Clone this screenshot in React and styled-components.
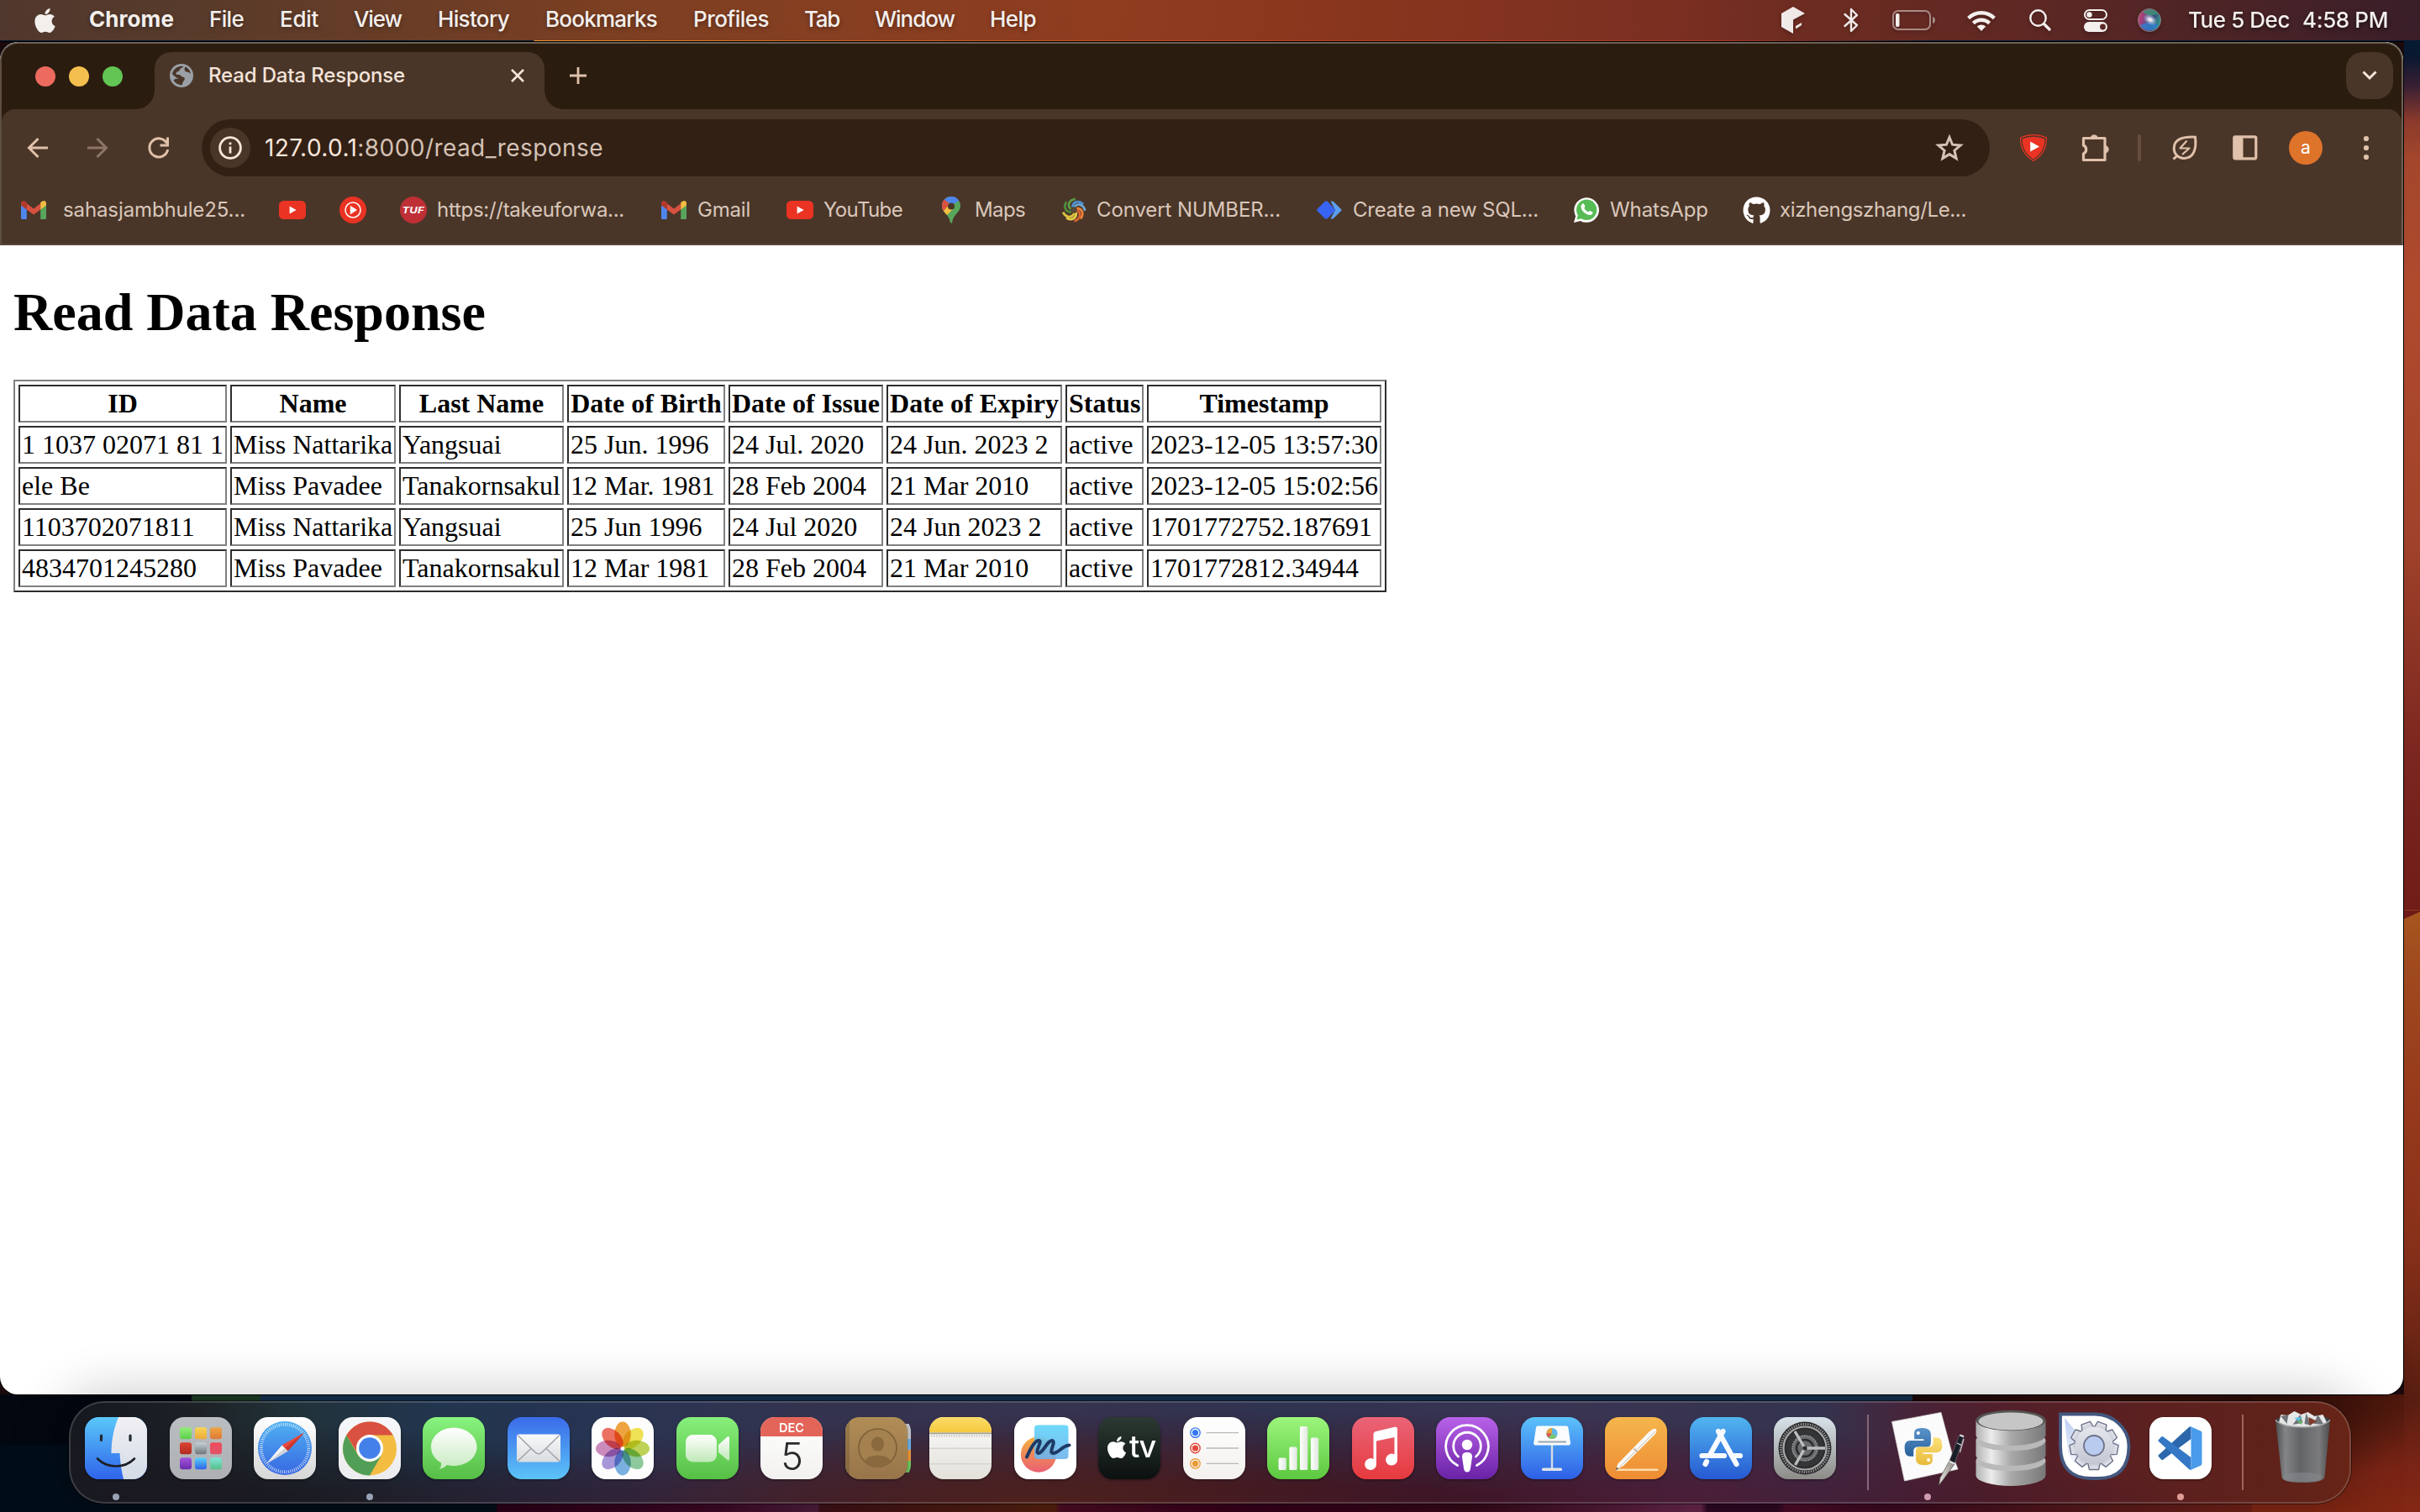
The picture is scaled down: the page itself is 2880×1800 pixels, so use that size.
import React, { useLayoutEffect, useRef } from "react";
import styled, { createGlobalStyle } from "styled-components";
import { FaApple, FaGithub } from "react-icons/fa";

const GlobalStyle = createGlobalStyle`
  * { box-sizing: border-box; }
  html, body { margin: 0; padding: 0; }
  body { width: 2880px; height: 1800px; overflow: hidden; background: #000; }
  svg { display: block; flex: none; overflow: visible; }
`;

const ui = `"Inter", "Roboto", "Liberation Sans", sans-serif`;
const serif = `"Liberation Serif", "Times New Roman", serif`;

const Screen = styled.div`
  width: 2880px;
  height: 1800px;
  display: flex;
  flex-direction: column;
  overflow: hidden;
  background:
    linear-gradient(90deg, #061a2e 0 635px, #e8942f 636px, #c96a26 960px, #b8431f 1500px, #a83a1e 2050px, #5a2a2c 2180px, #0a1d36 2300px, #061a33) 0 48px / 2880px 1px no-repeat,
    linear-gradient(#000, #000) 0 49px / 2861px 1px no-repeat,
    linear-gradient(156deg, #6e1b17 0 9px, transparent 10px) 2860px 1084px / 20px 16px no-repeat,
    radial-gradient(ellipse 190px 130px at 2700px 1650px, rgba(30, 8, 4, 0.75), transparent) 0 0 / 2880px 1800px no-repeat,
    linear-gradient(180deg, #061a33 0, #0a1830 20px, #3a1f33 55px, #8a3a2c 95px, #a3462c 140px, #b04a2d 300px, #a0422a 600px, #7b261f 850px, #701d18 1035px, #a8561f 1036px, #a04a1e 1100px, #973a1c 1260px, #8a311a 1420px, #6c2514 1550px, #5c1e11 1620px, #7a2416 1700px, #842814 1752px) 2861px 48px / 19px 1752px no-repeat,
    linear-gradient(180deg, #52190d 0, #5c1d10 30px, #7a2415 90px, #822713 140px) 2680px 1660px / 181px 140px no-repeat,
    linear-gradient(90deg, #020710 0 228px, #1b3a24 228px 310px, #15304c 310px 2276px, #1c0709 2276px, #3a120b 2600px, #451508 2861px) 0 1660px / 2861px 60px no-repeat,
    linear-gradient(90deg, #000d18 0 590px, #2a0018 592px, #3c0824 850px, #4c1c3c 973px, #3d1016 976px, #54200f 1255px, #4a0c22 1262px, #35001a 1480px, #340818 1750px, #66264c 2024px, #2c0824 2032px, #2c0820 2115px, #4a0c28 2125px, #3a0920 2250px, #571a1a 2500px, #7a2414 2780px, #842814 2880px) 0 1700px / 2880px 100px no-repeat,
    #1a0a0c;
`;

/* ---------- text that is tracked to an exact width ---------- */

const FitBox = styled.span`
  display: block;
  flex: none;
  width: ${(p) => p.$w}px;
  margin-left: ${(p) => p.$ml || 0}px;
  white-space: pre;
`;

function Fit({ w, ml, children }) {
  const inner = useRef(null);
  useLayoutEffect(() => {
    const el = inner.current;
    el.style.letterSpacing = "0px";
    const natural = el.getBoundingClientRect().width;
    el.style.letterSpacing = (w - natural) / el.textContent.length + "px";
  }, [w]);
  return (
    <FitBox $w={w} $ml={ml}>
      <span ref={inner}>{children}</span>
    </FitBox>
  );
}

/* ---------- menu bar ---------- */

const MenuBar = styled.header`
  flex: none;
  height: 48px;
  display: flex;
  align-items: center;
  padding: 0 38px 0 38px;
  color: #f3efed;
  font: 500 26px/46px ${ui};
  text-shadow: 0 2px 5px rgba(0, 0, 0, 0.35);
  background: linear-gradient(90deg, #50372d 0, #583b2b 230px, #6b3d26 500px, #7c3f22 720px, #853f21 960px, #8f3c1f 1300px, #88351e 1650px, #7a2f22 2000px, #6e2c21 2130px, #5f2823 2400px, #4c2426 2640px, #391e29 2880px);
`;

const AppName = styled.span`
  font-weight: 700;
`;

const MenuList = styled.nav`
  display: flex;
  margin-left: 37px;
  height: 48px;
`;

const Extras = styled.div`
  margin-left: auto;
  display: flex;
  align-items: center;
  height: 48px;
  filter: drop-shadow(0 2px 2px rgba(0, 0, 0, 0.25));
`;

const Extra = styled.div`
  margin-left: ${(p) => p.$ml || 0}px;
`;

const menus = [
  ["File", 41, 42],
  ["Edit", 46, 43],
  ["View", 57, 42],
  ["History", 85, 43],
  ["Bookmarks", 133, 43],
  ["Profiles", 90, 43],
  ["Tab", 42, 42],
  ["Window", 95, 42],
  ["Help", 55, 42],
];

const CubeIcon = () => (
  <svg width="28" height="32" viewBox="0 0 28 32" fill="#efe9e8">
    <path d="M14 0L28 8L14 15.5V32L0 24V8Z" />
    <path d="M17 23L24 19V22L17 26.5Z" />
  </svg>
);
const BluetoothIcon = () => (
  <svg width="18" height="30" viewBox="0 0 18 30" fill="none" stroke="#efe9e8" strokeWidth="2.4" strokeLinejoin="round" strokeLinecap="round">
    <path d="M1.5 8L16 21L9 28V2L16 9L1.5 22" />
  </svg>
);
const BatteryIcon = () => (
  <svg width="52" height="24" viewBox="0 0 52 24">
    <rect x="1" y="1" width="44" height="22" rx="6" fill="none" stroke="#a98a86" strokeWidth="2" />
    <rect x="4" y="4" width="4.5" height="16" rx="2" fill="#f3efed" />
    <path d="M48 8C52 9 52 15 48 16Z" fill="#a98a86" />
  </svg>
);
const WifiIcon = () => (
  <svg width="34" height="25" viewBox="0 0 34 25" fill="none" stroke="#f3efed" strokeWidth="4.4">
    <path d="M1.6 9.6A22 22 0 0 1 32.4 9.6" />
    <path d="M7.4 15.6A13.8 13.8 0 0 1 26.6 15.6" />
    <path d="M17 25L11.8 19.6A7.6 7.6 0 0 1 22.2 19.6Z" fill="#f3efed" stroke="none" />
  </svg>
);
const SearchIcon = () => (
  <svg width="26" height="26" viewBox="0 0 26 26" fill="none" stroke="#f3efed">
    <circle cx="10.5" cy="10.5" r="9.2" strokeWidth="2.4" />
    <path d="M17.5 17.5L24 24" strokeWidth="3.4" strokeLinecap="round" />
  </svg>
);
const ControlIcon = () => (
  <svg width="28" height="27" viewBox="0 0 28 27">
    <rect x="1" y="1" width="26" height="11" rx="5.5" fill="none" stroke="#f3efed" strokeWidth="2" />
    <circle cx="6.5" cy="6.5" r="3.2" fill="#f3efed" />
    <rect x="0" y="15" width="28" height="12" rx="6" fill="#f3efed" />
    <circle cx="22.5" cy="21" r="3.4" fill="#5a2826" />
  </svg>
);
const SiriIcon = () => (
  <svg width="28" height="28" viewBox="0 0 28 28">
    <defs>
      <linearGradient id="siriA" x1="0" y1="0.3" x2="1" y2="0.6">
        <stop offset="0" stopColor="#d23a6e" />
        <stop offset="0.4" stopColor="#6a4a86" />
        <stop offset="0.65" stopColor="#3a4a7c" />
        <stop offset="1" stopColor="#2fa08a" />
      </linearGradient>
      <radialGradient id="siriB">
        <stop offset="0" stopColor="#fff" />
        <stop offset="0.3" stopColor="#fff" stopOpacity="0.75" />
        <stop offset="1" stopColor="#9fd8ff" stopOpacity="0" />
      </radialGradient>
    </defs>
    <circle cx="14" cy="14" r="13.5" fill="url(#siriA)" stroke="#8d7f86" strokeWidth="1" />
    <path d="M6 4A13 13 0 0 1 24 6Q14 12 6 4Z" fill="#3a9a72" opacity="0.75" />
    <path d="M3 20A13 13 0 0 0 25 20Q14 14 3 20Z" fill="#2f7fd0" opacity="0.8" />
    <ellipse cx="15" cy="13.5" rx="9" ry="6" fill="url(#siriB)" transform="rotate(30 15 13.5)" />
  </svg>
);

/* ---------- browser window ---------- */

const Window = styled.section`
  flex: none;
  width: 2860px;
  height: 1610px;
  margin-top: 2px;
  display: flex;
  flex-direction: column;
  overflow: hidden;
  background: #fff;
  border-radius: 21px;
  box-shadow: 0 0 0 1px #000;
`;

const ChromeTop = styled.div`
  flex: none;
  height: 242px;
  background: #2b1c10;
  border: 2px solid #6d6055;
  border-left-color: #5d4d42;
  border-bottom: 2px solid #55453b;
  border-radius: 21px 21px 0 0;
`;

const TabStrip = styled.div`
  height: 78px;
  display: flex;
  padding: 10px 10px 0 40px;
`;

const Lights = styled.div`
  display: flex;
  gap: 16px;
  padding-top: 17px;
  width: 142px;
`;

const Light = styled.span`
  width: 24px;
  height: 24px;
  border-radius: 50%;
  background: ${(p) => p.$c};
`;

const Tab = styled.div`
  width: 464px;
  height: 68px;
  display: flex;
  align-items: center;
  padding: 0 24px 12px 18px;
  position: relative;
  border-radius: 20px 20px 0 0;
  background: #4a3628;
  color: #f5e4da;
  font: 500 24px/56px ${ui};
  &::before,
  &::after {
    content: "";
    position: absolute;
    bottom: 0;
    width: 22px;
    height: 22px;
  }
  &::before {
    left: -22px;
    background: radial-gradient(circle at 0 0, transparent 21.5px, #4a3628 22px);
  }
  &::after {
    right: -22px;
    background: radial-gradient(circle at 100% 0, transparent 21.5px, #4a3628 22px);
  }
`;

const TabClose = styled.span`
  margin-left: auto;
`;

const NewTab = styled.span`
  margin: 18px 0 0 30px;
`;

const TabSearch = styled.span`
  margin-left: auto;
  width: 56px;
  height: 56px;
  border-radius: 20px;
  display: flex;
  align-items: center;
  justify-content: center;
  background: #4a3628;
`;

const Bars = styled.div`
  height: 160px;
  background: #4a3628;
  border-radius: 16px 16px 0 0;
`;

const Toolbar = styled.div`
  height: 92px;
  display: flex;
  align-items: center;
  padding-left: 30px;
`;

const ToolIcon = styled.span`
  flex: none;
  width: ${(p) => p.$w}px;
  margin-left: ${(p) => p.$ml || 0}px;
  display: flex;
  justify-content: center;
`;

const Omnibox = styled.div`
  flex: none;
  width: 2128px;
  height: 68px;
  margin-left: 38px;
  display: flex;
  align-items: center;
  padding: 0 31px 0 10px;
  border-radius: 34px;
  background: #322014;
  color: #f7e6db;
  font: 400 28px/64px ${ui};
`;

const SiteInfo = styled.span`
  width: 48px;
  height: 48px;
  margin-right: 17px;
  border-radius: 50%;
  background: #4a3628;
  display: flex;
  align-items: center;
  justify-content: center;
`;

const UrlPath = styled.span`
  color: #d5c2b6;
`;

const StarSlot = styled.span`
  margin-left: auto;
`;

const BarDivider = styled.span`
  width: 4px;
  height: 32px;
  margin-left: 33px;
  border-radius: 2px;
  background: #664e3f;
`;

const Avatar = styled.span`
  flex: none;
  width: 40px;
  height: 40px;
  margin-left: 37px;
  border-radius: 50%;
  background: #de732a;
  color: #fff;
  font: 400 21px/39px ${ui};
  text-align: center;
`;

const BookmarkBar = styled.div`
  height: 56px;
  display: flex;
  align-items: center;
  color: #d9c7bb;
  font: 400 24px/56px ${ui};
`;

const BookmarkIcon = styled.span`
  flex: none;
  width: 32px;
  margin-left: ${(p) => p.$ml}px;
  display: flex;
  justify-content: center;
`;

const Page = styled.main`
  flex: 1;
  padding: 43px 16px;
  color: #000;
  font-family: ${serif};
`;

const Heading = styled.h1`
  margin: 0 0 43px;
  font-size: 64px;
  line-height: 74px;
  font-weight: 700;
`;

const DataTable = styled.table`
  table-layout: fixed;
  width: 1634px;
  border: 2px solid;
  border-color: #808080 #2c2c2c #2c2c2c #808080;
  border-collapse: separate;
  border-spacing: 4px;
  font-size: 32px;
  line-height: 37px;
  white-space: nowrap;
  th,
  td {
    border: 2px solid;
    border-color: #2c2c2c #808080 #808080 #2c2c2c;
    padding: 2px;
    text-align: left;
  }
  th {
    text-align: center;
    font-weight: 700;
  }
`;

const colWidths = [248, 197, 196, 188, 184, 209, 93, 279];
const headers = ["ID", "Name", "Last Name", "Date of Birth", "Date of Issue", "Date of Expiry", "Status", "Timestamp"];
const records = [
  ["1 1037 02071 81 1", "Miss Nattarika", "Yangsuai", "25 Jun. 1996", "24 Jul. 2020", "24 Jun. 2023 2", "active", "2023-12-05 13:57:30"],
  ["ele Be", "Miss Pavadee", "Tanakornsakul", "12 Mar. 1981", "28 Feb 2004", "21 Mar 2010", "active", "2023-12-05 15:02:56"],
  ["1103702071811", "Miss Nattarika", "Yangsuai", "25 Jun 1996", "24 Jul 2020", "24 Jun 2023 2", "active", "1701772752.187691"],
  ["4834701245280", "Miss Pavadee", "Tanakornsakul", "12 Mar 1981", "28 Feb 2004", "21 Mar 2010", "active", "1701772812.34944"],
];

/* ---------- browser icons ---------- */

const peach = "#e0c1ab";

const GlobeIcon = () => (
  <svg width="28" height="28" viewBox="0 0 28 28">
    <circle cx="14" cy="14" r="14" fill="#9aa0a6" />
    <path d="M17 3.2C14 5 11.5 5.5 11.5 8.5C8 9 7 11 8 13C10 12.5 13 13 14.5 15.5C18 15.5 19 18 16.5 20.5C15 22 15.5 24 14.5 25.2C11 25.5 7 23.5 4.6 20C5.5 17.5 7.5 18 10.5 17.5C8 16.5 5.5 15 3 12C4 6.5 9 2.8 14 2.7ZM18.5 3.5C17 6 17 8 19.5 9.5C22 9.5 24 10.5 25 12C24.8 8.5 22 4.8 18.5 3.5Z" fill="#4a3628" />
  </svg>
);
const CloseIcon = () => (
  <svg width="16" height="16" viewBox="0 0 16 16" stroke="#f5e4da" strokeWidth="2.6">
    <path d="M1 1L15 15M15 1L1 15" />
  </svg>
);
const PlusIcon = () => (
  <svg width="20" height="20" viewBox="0 0 20 20" stroke={peach} strokeWidth="2.8">
    <path d="M10 0V20M0 10H20" />
  </svg>
);
const ChevronIcon = () => (
  <svg width="18" height="12" viewBox="0 0 18 12" fill="none" stroke="#f5e4da" strokeWidth="3">
    <path d="M1.5 1.5L9 9L16.5 1.5" />
  </svg>
);
const ArrowIcon = ({ forward }) => (
  <svg width="26" height="26" viewBox="0 0 26 26" fill="none" stroke={forward ? "#8d7567" : peach} strokeWidth="3" transform={forward ? "scale(-1 1)" : undefined}>
    <path d="M25 13H3M13.5 2L2.5 13L13.5 24" />
  </svg>
);
const ReloadIcon = () => (
  <svg width="26" height="26" viewBox="0 0 26 26" fill="none" stroke={peach} strokeWidth="3">
    <path d="M22.500 7.500A11 11 0 1 0 23.700 15" />
    <path d="M23.500 0.500V10H14.500" />
  </svg>
);
const InfoIcon = () => (
  <svg width="28" height="28" viewBox="0 0 28 28" fill="none" stroke="#f7e6db" strokeWidth="2.8">
    <circle cx="14" cy="14" r="12.4" />
    <path d="M14 12.5V20.5M14 7.5V10.3" />
  </svg>
);
const StarIcon = () => (
  <svg width="34" height="32" viewBox="0 0 34 32" fill="none" stroke="#d5c2b6" strokeWidth="3">
    <path d="M17 3.5L20.6 12.2L30.2 13L22.9 19.2L25.1 28.5L17 23.6L8.9 28.5L11.1 19.2L3.8 13L13.4 12.2Z" />
  </svg>
);
const ShieldIcon = () => (
  <svg width="32" height="32" viewBox="0 0 32 32">
    <path d="M16 0.6Q24 0.6 31.4 4Q32 22 16 31.4Q0 22 0.6 4Q8 0.6 16 0.6Z" fill="none" stroke="#ea3323" strokeWidth="1.2" />
    <path d="M16 2.8Q23.5 2.8 29.4 5.6Q29.6 21 16 29.4Q2.4 21 2.6 5.6Q8.5 2.8 16 2.8Z" fill="#ea3323" />
    <path d="M12.2 8.5V20.5L23 14.5Z" fill="#fff" />
  </svg>
);
const PuzzleIcon = () => (
  <svg width="34" height="34" viewBox="0 0 34 34">
    <path d="M2.500 5.500H28V31.500H2.500V24A5.500 5.500 0 0 0 2.500 14Z" fill="none" stroke={peach} strokeWidth="3.2" strokeLinejoin="round" />
    <path d="M11 5A4.400 4.400 0 0 1 19.500 5ZM29 14.500A4.400 4.400 0 0 1 29 23Z" fill={peach} stroke={peach} />
  </svg>
);
const LeafIcon = () => (
  <svg width="30" height="30" viewBox="0 0 30 30" fill="none" stroke={peach} strokeWidth="3">
    <path d="M27.5 2.2C29 14 27 27.5 14 27.5A11.8 11.8 0 0 1 2.2 15.7C2.2 4.5 13 1.5 27.5 2.2Z" />
    <path d="M1.5 28.5L6.5 23.8" />
    <path d="M17.5 6.5L9.5 15.5H20.5L12 23" strokeWidth="2.2" strokeLinejoin="round" />
  </svg>
);
const PanelIcon = () => (
  <svg width="30" height="30" viewBox="0 0 30 30">
    <rect x="1.8" y="1.8" width="26" height="26" rx="1.5" fill="none" stroke={peach} strokeWidth="3.2" />
    <rect x="2" y="2" width="10.5" height="26" fill={peach} />
  </svg>
);
const DotsIcon = () => (
  <svg width="8" height="30" viewBox="0 0 8 30" fill={peach}>
    <circle cx="4" cy="4" r="3.1" />
    <circle cx="4" cy="15" r="3.1" />
    <circle cx="4" cy="26" r="3.1" />
  </svg>
);

const GmailIcon = () => (
  <svg width="30" height="22" viewBox="0 0 30 22">
    <path d="M0 5V20.5Q0 22 1.5 22H6.8V10Z" fill="#4f86ec" />
    <path d="M30 5V20.5Q30 22 28.5 22H23.2V10Z" fill="#58a55c" />
    <path d="M6.8 3.2L15 9.4L23.2 3.2V10.4L15 16.6L6.8 10.4Z" fill="#d85140" />
    <path d="M0 3Q0.5-0.8 4.5 0.4L6.8 2V10.4L0 5.4Z" fill="#b3392c" />
    <path d="M30 3Q29.500-0.8 25.500 0.4L23.200 2V10.4L30 5.4Z" fill="#f1bd42" />
  </svg>
);
const YoutubeIcon = () => (
  <svg width="32" height="22" viewBox="0 0 32 22">
    <rect width="32" height="22" rx="5.5" fill="#ea3323" />
    <path d="M12.600 6.400V15.600L20.600 11Z" fill="#fff" />
  </svg>
);
const YtMusicIcon = () => (
  <svg width="32" height="32" viewBox="0 0 32 32">
    <circle cx="16" cy="16" r="16" fill="#ea3323" />
    <circle cx="16" cy="16" r="9" fill="none" stroke="#fff" strokeWidth="1.5" />
    <path d="M12.800 10.800V21.200L21 16Z" fill="#fff" />
  </svg>
);
const TufIcon = () => (
  <svg width="32" height="32" viewBox="0 0 32 32">
    <circle cx="16" cy="16" r="16" fill="#bf2f36" />
    <text x="15.600" y="20" textAnchor="middle" textLength="26" lengthAdjust="spacingAndGlyphs" fill="#fff" fontFamily="Inter, sans-serif" fontStyle="italic" fontWeight="700" fontSize="11">TUF</text>
  </svg>
);
const MapsIcon = () => (
  <svg width="22" height="32" viewBox="0 0 22 32">
    <defs>
      <clipPath id="pin">
        <path d="M11 0A11 11 0 0 1 22 11C22 19 13.500 21 12.200 30.500Q11 33 9.800 30.500C8.500 21 0 19 0 11A11 11 0 0 1 11 0Z" />
      </clipPath>
    </defs>
    <g clipPath="url(#pin)">
      <rect width="22" height="32" fill="#58a55c" />
      <path d="M0 22L16 3L22 0H0Z" fill="#4f86ec" />
      <path d="M2 0L10 8L0 20V0Z" fill="#d85140" />
      <path d="M2 3L22-2V4L12 10L6 6Z" fill="#4f86ec" />
      <path d="M0 14L8 8L13 15L4 24Z" fill="#f1bd42" />
      <path d="M0 4L8 10L2 17H0Z" fill="#d85140" />
    </g>
    <circle cx="11" cy="11.500" r="4" fill="#4a3628" />
  </svg>
);
const SwirlIcon = () => {
  const arms = [
    ["#5d9a48", 0], ["#4f8fd0", 50], ["#6fa8d0", 85], ["#e8823a", 135],
    ["#d8652f", 170], ["#e6c94a", 215], ["#d8c23e", 250], ["#4c8a3c", 310],
  ];
  return (
    <svg width="28" height="30" viewBox="-15 -15 30 30" fill="none" strokeWidth="3">
      {arms.map(([c, a]) => (
        <path key={c} d="M-4-1C-9-6-6-13 2-14" stroke={c} transform={`rotate(${a})`} />
      ))}
      <circle r="3.200" fill="#5a4a38" />
    </svg>
  );
};
const DiamondIcon = () => (
  <svg width="30" height="22" viewBox="0 0 30 22">
    <path d="M16.500 0.500Q19 0 20.500 1.500L29.500 10.500Q30 11 29.500 11.500L20.500 20.500Q19 22 16.500 21.500L22 11Z" fill="#5c9ff0" />
    <path d="M9.500 1Q11.500-0.500 13.500 1.500L22.500 11L13.500 20.500Q11.500 22.500 9.500 21L0.500 12Q-0.300 11 0.500 10Z" fill="#3864f4" />
  </svg>
);
const WhatsappIcon = () => (
  <svg width="30" height="30" viewBox="0 0 30 30">
    <path d="M0 30L2.200 22.200A14.800 14.800 0 1 1 7.800 27.900Z" fill="#fff" />
    <circle cx="15.200" cy="14.800" r="12.200" fill="#57bb56" />
    <path d="M3.500 26.500L5 20.500L9.500 25Z" fill="#57bb56" />
    <path d="M10.400 7.600C11.400 7 12 7.400 12.300 8.200L13.300 10.600C13.500 11.300 12.800 12 12.300 12.700C13.300 14.800 15 16.300 17.400 17.300C18.100 16.800 18.600 15.800 19.300 16L22 17.300C22.900 17.700 22.400 19.400 21.600 20.200C19.800 21.700 16.800 21 14 19.200C11.200 17.400 8.600 14 8.500 11.200C8.500 9.600 9.300 8.300 10.400 7.600Z" fill="#fff" />
  </svg>
);
const OctocatIcon = () => <FaGithub size={33} color="#fff" />;

const bookmarks = [
  { ml: 22, Icon: GmailIcon, gap: 19, text: "sahasjambhule25...", w: 217 },
  { ml: 40, Icon: YoutubeIcon },
  { ml: 40, Icon: YtMusicIcon },
  { ml: 40, Icon: TufIcon, gap: 12, text: "https://takeuforwa...", w: 223 },
  { ml: 43, Icon: GmailIcon, gap: 12, text: "Gmail", w: 63 },
  { ml: 43, Icon: YoutubeIcon, gap: 12, text: "YouTube", w: 94 },
  { ml: 42, Icon: MapsIcon, gap: 12, text: "Maps", w: 60 },
  { ml: 42, Icon: SwirlIcon, gap: 11, text: "Convert NUMBER...", w: 219 },
  { ml: 42, Icon: DiamondIcon, gap: 12, text: "Create a new SQL...", w: 221 },
  { ml: 41, Icon: WhatsappIcon, gap: 12, text: "WhatsApp", w: 117 },
  { ml: 41, Icon: OctocatIcon, gap: 12, text: "xizhengszhang/Le...", w: 222 },
];

/* ---------- dock ---------- */

const Dock = styled.footer`
  flex: none;
  z-index: 1;
  width: 2716px;
  height: 122px;
  margin: 8px 0 0 82px;
  padding: 0 0 0 4px;
  display: flex;
  border: 2px solid rgba(255, 255, 255, 0.16);
  border-radius: 42px;
  background:
    radial-gradient(ellipse 480px 90px at 1150px 122px, rgba(84, 38, 24, 0.7), transparent),
    radial-gradient(ellipse 320px 80px at 1950px 112px, rgba(86, 30, 62, 0.55), transparent),
    radial-gradient(ellipse 1150px 130px at 1420px 140px, rgba(62, 20, 36, 0.95) 30%, transparent),
    radial-gradient(ellipse 620px 100px at 160px 125px, rgba(26, 25, 33, 0.95) 20%, transparent),
    linear-gradient(90deg, #15181f 0, #1d2227 160px, #213238 260px, #22354e 430px, #263452 600px, #34334f 900px, #35334f 1200px, #2f3350 1450px, #3a3453 1800px, #33334f 2080px, #482338 2200px, #521f2a 2300px, #5b2021 2450px, #602219 2650px, #682516 2717px);
  background-origin: border-box;
  box-shadow: 0 0 0 1px rgba(0, 0, 0, 0.5), 0 0 60px 12px rgba(0, 0, 0, 0.2);
`;

const DockItem = styled.div`
  flex: none;
  width: ${(p) => p.$w || 100.5}px;
  height: 118px;
  padding-top: 17px;
  display: flex;
  flex-direction: column;
  align-items: center;
  position: relative;
`;

const RunningDot = styled.i`
  position: absolute;
  top: 108px;
  width: 8px;
  height: 8px;
  border-radius: 50%;
  background: ${(p) => p.$c};
`;

const DockRule = styled.span`
  flex: none;
  width: 2px;
  height: 90px;
  margin: 14px ${(p) => p.$r}px 0 ${(p) => p.$l}px;
  background: ${(p) => p.$c};
`;

const Tile = styled.div`
  width: 74px;
  height: 74px;
  border-radius: 17px;
  overflow: hidden;
  background: ${(p) => p.$bg};
  box-shadow: 0 1px 3px rgba(0, 0, 0, 0.45);
`;

const FreeIcon = styled.div`
  width: 96px;
  height: 96px;
  margin-top: -11px;
  flex: none;
`;

const Art = ({ children, size = 74 }) => (
  <svg width={size} height={size} viewBox={`0 0 ${size} ${size}`}>{children}</svg>
);

const Grad = ({ id, from, to, x2 = 0, y2 = 1 }) => (
  <linearGradient id={id} x1="0" y1="0" x2={x2} y2={y2}>
    <stop offset="0" stopColor={from} />
    <stop offset="1" stopColor={to} />
  </linearGradient>
);

const Finder = () => (
  <Art>
    <defs>
      <Grad id="fa" from="#5ac8fa" to="#2f63ea" />
      <Grad id="fb" from="#f1f0f4" to="#d3dbe6" />
    </defs>
    <rect width="74" height="74" fill="url(#fa)" />
    <path d="M40 0C34 14 31.500 29 31.500 43H41.500C42 54 43.500 64 46 74H74V0Z" fill="url(#fb)" />
    <path d="M19.500 22V27.500M54 22V27.500" stroke="#22292f" strokeWidth="3.200" strokeLinecap="round" />
    <path d="M15 49.500C27 61.500 47 61.500 59 49.500" fill="none" stroke="#1b1f26" strokeWidth="2.600" strokeLinecap="round" />
  </Art>
);
const Launchpad = () => {
  const cells = [
    ["#92ee7a", "#5fce4a"], ["#f8d552", "#eda93a"], ["#eda644", "#df7a35"],
    ["#dd4335", "#b32a20"], ["#c5d2d8", "#70757a"], ["#ee4a5e", "#e0566a"],
    ["#a354dc", "#6c2cae"], ["#5ad2fa", "#2f62e6"], ["#83e6da", "#55bf87"],
  ];
  return (
    <Art>
      {cells.map(([a, b], i) => (
        <g key={a}>
          <defs><Grad id={"lp" + i} from={a} to={b} /></defs>
          <rect x={12 + (i % 3) * 18} y={12.300 + Math.floor(i / 3) * 18} width="14" height="14" rx="3" fill={`url(#lp${i})`} />
        </g>
      ))}
    </Art>
  );
};
const Safari = () => (
  <Art>
    <defs><Grad id="sf" from="#4fb0f1" to="#3868e2" /></defs>
    <circle cx="37" cy="37" r="32" fill="url(#sf)" />
    <circle cx="37" cy="37" r="28.300" fill="none" stroke="#fff" strokeOpacity="0.75" strokeWidth="4" strokeDasharray="0.900 1.569" />
    <path d="M60 18.500L40.500 40.500L33.500 33.500Z" fill="#ea4a3c" />
    <path d="M60 18.500L40.500 40.500L37 37Z" fill="#c9352c" />
    <path d="M15 55.500L33.500 33.500L40.500 40.500Z" fill="#f7f7f7" />
    <path d="M15 55.500L37 37L40.500 40.500Z" fill="#d0d3d8" />
  </Art>
);
const ChromeLogo = () => (
  <Art>
    <circle cx="37" cy="37.500" r="32" fill="#f3bd42" />
    <path d="M9.300 21.500L23.200 45.500L37 53.500L50.900 45.500L37 69.500A32 32 0 0 1 9.300 21.500Z" fill="#519e57" />
    <path d="M9.300 21.500A32 32 0 0 1 64.700 21.500H37A16 16 0 0 0 22 42Z" fill="#d95141" />
    <circle cx="37" cy="37" r="16" fill="#fff" />
    <circle cx="37" cy="37" r="12.800" fill="#4480ea" />
  </Art>
);
const Messages = () => (
  <Art>
    <defs><Grad id="ms" from="#ffffff" to="#c7eac0" /></defs>
    <path d="M37 12.700C52.500 12.700 64.500 22.800 64.500 35.500S52.500 58 37 58C34 58 31.500 57.700 29 57C26.500 59.500 23 61.500 19.500 62C21.500 60 22.500 57.500 22 54.500C14.500 50.500 10 43.500 10 35.500C10 22.800 21.500 12.700 37 12.700Z" fill="url(#ms)" />
  </Art>
);
const Mail = () => (
  <Art>
    <defs><Grad id="ml" from="#f8f9fa" to="#d9dcdf" /></defs>
    <rect x="11" y="20.600" width="52" height="33" rx="3" fill="url(#ml)" />
    <path d="M12 52.500L28 37.500M62 52.500L46 37.500M12.500 22L32 41Q37 46.500 42 41L61.500 22" fill="none" stroke="#9ea3a8" strokeWidth="1.500" />
  </Art>
);
const Petal = styled.ellipse`
  mix-blend-mode: multiply;
`;
const Photos = () => {
  const petals = ["#f0a036", "#f0e24a", "#bcd24e", "#88c896", "#74aee0", "#a492d8", "#cc86bc", "#ec6a5c"];
  return (
    <Art>
      {petals.map((c, i) => (
        <Petal key={c} cx="37" cy="20.500" rx="9.700" ry="15" fill={c} opacity="0.95" transform={`rotate(${i * 45} 37 37.500)`} />
      ))}
    </Art>
  );
};
const FaceTime = () => (
  <Art>
    <defs><Grad id="ft" from="#ffffff" to="#bfe8b8" /></defs>
    <rect x="11" y="21" width="37" height="32.500" rx="8.500" fill="url(#ft)" />
    <path d="M50 33L60.500 23.500Q63 22 63 25V49.500Q63 53 60.500 51L50 42Z" fill="url(#ft)" />
  </Art>
);
const Calendar = () => (
  <Art>
    <rect width="74" height="23" fill="#e3655a" />
    <text x="37" y="18" textAnchor="middle" textLength="30" lengthAdjust="spacingAndGlyphs" fill="#fff" fontFamily="Inter, sans-serif" fontWeight="600" fontSize="15">DEC</text>
    <text x="37.500" y="62.500" textAnchor="middle" fill="#2a2a2a" fontFamily="Inter, sans-serif" fontWeight="300" fontSize="45">5</text>
  </Art>
);
const ContactsWrap = styled.div`
  width: 78px;
  margin-left: 4px;
  border-radius: 17px;
  background: linear-gradient(180deg, transparent 8px, #c4c4c8 8px 26px, #6aaee2 26px 39px, #e8953a 39px 52px, #6cc65c 52px 66px, transparent 66px);
`;
const Contacts = () => (
  <ContactsWrap>
    <Tile $bg="linear-gradient(#b08d56, #98744a)">
      <Art>
        <rect width="5" height="74" fill="#000" opacity="0.12" />
        <circle cx="38.500" cy="36.500" r="22.500" fill="#a58150" stroke="#7d5f38" strokeWidth="1.600" />
        <ellipse cx="38.500" cy="32" rx="7.500" ry="8.800" fill="#8a693f" />
        <path d="M22.500 52.500A22 22 0 0 0 54.500 52.500Q50 45.500 38.500 45.500T22.500 52.500Z" fill="#8a693f" />
      </Art>
    </Tile>
  </ContactsWrap>
);
const Notes = () => (
  <Art>
    <defs><Grad id="nt" from="#fbdc68" to="#f6c83e" /></defs>
    <rect width="74" height="18.500" fill="url(#nt)" />
    <rect y="18.500" width="74" height="1.800" fill="#a4a199" />
    <path d="M2 22.500H74" stroke="#b4b2ac" strokeWidth="1.600" strokeDasharray="1.400 1.600" />
    <path d="M0 37.300H74M0 55.700H74" stroke="#d4d3cf" strokeWidth="1.400" />
  </Art>
);
const Freeform = () => (
  <Art>
    <defs>
      <Grad id="ff1" from="#f4b23f" to="#ea5f72" />
      <Grad id="ff2" from="#5fd4fa" to="#6eb2ec" />
    </defs>
    <circle cx="29" cy="44.500" r="21.200" fill="url(#ff1)" />
    <rect x="24" y="9.500" width="40.500" height="40.500" rx="4" fill="url(#ff2)" opacity="0.9" />
    <path d="M15 47.500C19 38 25 27 29.500 28C34 29 23.500 42 29 43C34 43.500 40 26.500 45.500 28C50 30 40 43 46.500 43C53 43 57 34 65.500 33.500" fill="none" stroke="#1d3a66" strokeWidth="4" strokeLinecap="round" />
  </Art>
);
const TvFace = styled.div`
  display: flex;
  align-items: center;
  justify-content: center;
  height: 72px;
  color: #fff;
  font: 500 36px/60px ${ui};
  letter-spacing: -1.5px;
  span {
    margin-top: -3px;
  }
`;
const Tv = () => (
  <TvFace>
    <FaApple size={30} />
    <span>tv</span>
  </TvFace>
);
const Reminders = () => (
  <Art>
    {["#3478f6", "#e5483c", "#ea9a35"].map((c, i) => (
      <g key={c} transform={`translate(14.500 ${18.600 + i * 18.400})`}>
        <circle r="5.700" fill="none" stroke={c} strokeWidth="1.400" />
        <circle r="3.600" fill={c} />
        <path d="M13 0H51.500" stroke="#b9b9bd" strokeWidth="1.400" />
      </g>
    ))}
  </Art>
);
const Numbers = () => (
  <Art>
    <defs><Grad id="nb" from="#ffffff" to="#dfe8dc" x2={1} y2={0} /></defs>
    {[[13.600, 48.500], [26.400, 35.500], [39, 11], [52, 24.500]].map(([x, y]) => (
      <rect key={x} x={x} y={y} width="9.300" height={63 - y} rx="1.600" fill="url(#nb)" />
    ))}
  </Art>
);
const Music = () => (
  <Art>
    <path d="M25.500 20.500Q25.500 17.500 28.500 17L51 11.800Q54 11.200 54 14V49.500A7 7 0 1 1 50.500 44.500V24L29 28.500V55A7 7 0 1 1 25.500 50Z" fill="#fff" />
  </Art>
);
const Podcasts = () => (
  <Art>
    <g fill="none" stroke="#fff" strokeWidth="2.800" strokeLinecap="round">
      <path d="M25.500 57.500A25.300 25.300 0 1 1 48.500 57.500" />
      <path d="M26.500 47A16.300 16.300 0 1 1 47.500 47" />
    </g>
    <circle cx="37" cy="33" r="6.200" fill="#fff" />
    <path d="M31 47.500C31 43.500 33 42 37 42S43 43.500 43 47.500L41 61Q40.300 65.500 37 65.500T33 61Z" fill="#fff" />
  </Art>
);
const Keynote = () => (
  <Art>
    <path d="M35.800 33H38.200V62H35.800Z" fill="#d7dde2" />
    <rect x="25" y="60.500" width="24" height="3.600" rx="1.600" fill="#dfe3e8" />
    <path d="M20 10.500H54Q56 10.500 56.400 12.500L59 31Q59.200 33.500 56.500 33.500H17.500Q15 33.500 15.200 31L18 12.500Q18.300 10.500 20 10.500Z" fill="#fafbfc" />
    <path d="M20.500 28.500H54V30.500H20.500Z" fill="#9aa5b0" />
    <circle cx="37" cy="19.500" r="6.600" fill="#63b8ea" />
    <path d="M37 19.500V12.900A6.600 6.600 0 0 0 30.400 19.500Z" fill="#e8a23c" />
    <path d="M37 19.500H30.400A6.600 6.600 0 0 0 33 24.800Z" fill="#d9534a" />
    <path d="M37 19.500L33 24.800A6.600 6.600 0 0 0 42.500 23Z" fill="#7cc66a" />
  </Art>
);
const PagesArt = () => (
  <Art>
    <path d="M14 62.800H62.500" stroke="#fbdcae" strokeWidth="2.400" strokeLinecap="round" />
    <path d="M60.500 14Q62.500 16 60 20L22 58L12.500 63.500L15.500 55.500L52 18Q58 12.500 60.500 14Z" fill="#f9f7f4" />
    <path d="M34.500 37.500L38.500 41.500" stroke="#b8a58c" strokeWidth="1.600" />
    <path d="M17 60L60 17" stroke="#c9c2b8" strokeWidth="1" />
    <path d="M12.500 63.500L14 59.500L16.500 61.500Z" fill="#6b5a48" />
  </Art>
);
const AppStore = () => (
  <Art>
    <g stroke="#f7fafe" strokeWidth="6.200" strokeLinecap="round">
      <path d="M34 17L55.500 56" />
      <path d="M39.500 17L25 43" />
      <path d="M14.500 46H41" />
      <path d="M53 46H60" />
      <path d="M20 53L18.500 56" />
    </g>
  </Art>
);
const Settings = () => (
  <Art>
    <circle cx="37" cy="37" r="31.500" fill="#2c2c2e" />
    <circle cx="37" cy="37" r="28.500" fill="none" stroke="#9fa0a0" strokeWidth="3" strokeDasharray="1.200 1.600" />
    <circle cx="37" cy="37" r="25.500" fill="none" stroke="#a8a9a9" strokeWidth="2.200" />
    <circle cx="37" cy="37" r="22.500" fill="#343536" />
    <circle cx="37" cy="37" r="15" fill="#6c6d6f" stroke="#a0a1a2" strokeWidth="1.400" strokeDasharray="1.800 1.200" />
    <circle cx="37" cy="37" r="10" fill="#6a6b6d" stroke="#2c2c2e" strokeWidth="2.600" />
    <path d="M37 37H61M37 37L25 17M37 37L25.500 57" stroke="#bcbdbd" strokeWidth="3.400" />
    <circle cx="37" cy="37" r="2.600" fill="#2c2c2e" />
  </Art>
);
const PythonDoc = () => (
  <Art size={96}>
    <defs>
      <Grad id="pya" from="#5b93cb" to="#28609b" />
      <Grad id="pyb" from="#fbe27a" to="#e9b93a" />
      <Grad id="pyc" from="#e9e6e0" to="#8d8a86" x2={1} y2={0} />
    </defs>
    <path d="M5.500 16.500L64 5.500L77 54L84 73L20.500 87Z" fill="#fbfbfb" stroke="#d4d0ce" strokeWidth="0.800" />
    <g transform="translate(19 24) scale(0.94)">
      <path d="M24 0C13 0 14 5 14 9V14H26V16H9C3 16 1 21 2 28C2.500 35 6 36 10 36H13V29Q13 24 19 24H30Q35 24 35 18V8Q35 0 24 0Z" fill="url(#pya)" />
      <path d="M27 47C38 47 37 42 37 38V33H25V31H42C48 31 50 26 49 20C48.500 13 45 12 41 12H38V19Q38 24 32 24H21Q16 24 16 29V39Q16 47 27 47Z" fill="url(#pyb)" />
      <circle cx="19" cy="6.500" r="2.200" fill="#fff" />
      <circle cx="32" cy="40.500" r="2.200" fill="#fff" />
    </g>
    <path d="M86 32L91 34L80 67L73.500 64Z" fill="#191d26" stroke="#8b8f98" strokeWidth="0.500" />
    <path d="M73.500 64L80 67L67 85L61.500 92L63 83Z" fill="url(#pyc)" stroke="#55514c" strokeWidth="0.700" />
    <path d="M86.500 32.500L91 34.300M73.800 63.500L80 66.500" stroke="#e2e2e2" strokeWidth="2" />
    <path d="M83 42L88 44.300M91 37L86.500 53" stroke="#c5c8cd" strokeWidth="1.300" />
  </Art>
);
const Database = () => (
  <Art size={96}>
    <defs>
      <linearGradient id="dbg" x1="0" x2="1" y1="0" y2="0">
        <stop offset="0" stopColor="#b2b2b2" />
        <stop offset="0.220" stopColor="#ececec" />
        <stop offset="0.500" stopColor="#a9a9a9" />
        <stop offset="1" stopColor="#787878" />
      </linearGradient>
    </defs>
    {[63, 39, 15].map((y) => (
      <g key={y}>
        <path d={`M5.500 ${y}V${y + 17.500}A41.500 12.500 0 0 0 88.500 ${y + 17.500}V${y}Z`} fill="url(#dbg)" />
        <ellipse cx="47" cy={y} rx="41.500" ry="12.300" fill={y === 15 ? "#555" : "#b9b9b9"} />
        {y === 15 && <ellipse cx="47" cy="16" rx="38.500" ry="10.500" fill="#c6c6c6" />}
      </g>
    ))}
  </Art>
);
const Automator = () => {
  const teeth = Array.from({ length: 9 }, (_, i) => i * 40);
  return (
    <Art size={96}>
      <defs>
        <Grad id="aub" from="#a9bfee" to="#ffffff" x2={0.3} />
        <Grad id="aug" from="#e6e8ee" to="#c3c5d2" />
      </defs>
      <path d="M5 7.500H46A41 38 0 0 1 86.500 45Q86.500 84 50 84H42Q5 84 5 45Z" fill="#fff" stroke="#43587f" strokeWidth="3.800" />
      <path d="M10 12L27 32L76 42Q78 72 48 74Q20 74 14 52Z" fill="url(#aub)" opacity="0.8" />
      <g transform="translate(45 45)">
        <g fill="url(#aug)" stroke="#6d7289" strokeWidth="1.400" strokeLinejoin="round">
          {teeth.map((a) => (
            <path key={a} d="M-7.500-20L-5.500-28.500H5.500L7.500-20Z" transform={`rotate(${a + 20})`} />
          ))}
        </g>
        <circle r="22.500" fill="url(#aug)" />
        <circle r="12" fill="#b9cbef" stroke="#6d7289" strokeWidth="1.800" />
      </g>
    </Art>
  );
};
const VsCode = () => (
  <Art>
    <path d="M10.500 46.500L14 50.500Q15 51.500 16.500 50.500L49.500 26V11.500Q48 11 46.500 12.500L11 45Q10 45.500 10.500 46.500Z" fill="#2c67ab" />
    <path d="M10.500 27.500L14 23.500Q15 22.500 16.500 23.500L49.500 48V62.500Q48 63 46.500 61.500L11 29Q10 28.500 10.500 27.500Z" fill="#3478c6" />
    <path d="M49.500 11.500L61 16.500Q62.500 17.200 62.500 19V55Q62.500 57 61 57.700L49.500 62.700Q47.500 63 46.500 61.500Q49.500 63 49.500 59V15Q49.500 11 46.500 12.500Q47.500 11 49.500 11.500Z" fill="#4a9bea" />
  </Art>
);
const Trash = () => (
  <Art size={96}>
    <defs>
      <linearGradient id="trg" x1="0" x2="1" y1="0" y2="0">
        <stop offset="0" stopColor="#4b4f52" />
        <stop offset="0.180" stopColor="#85898c" />
        <stop offset="0.450" stopColor="#63676a" />
        <stop offset="0.800" stopColor="#7c7f82" />
        <stop offset="1" stopColor="#4a4d50" />
      </linearGradient>
    </defs>
    <g transform="translate(0.500 2)">
      <ellipse cx="48" cy="13" rx="32.500" ry="7" fill="#3d4042" />
      <path d="M19 17L22 6L30 7L38 2L46 6L54 3L62 8L72 6L77 16L66 21H30Z" fill="#e6e6e6" />
      <path d="M22 8L29 17L31 6ZM36 18L45 6L48 16ZM52 4L58 19L50 17ZM66 6L61 17L73 18Z" fill="#6f7377" />
      <path d="M38 10L48 9L43 14Z" fill="#58c2dd" />
      <path d="M55 9L65 14L56 19Z" fill="#7c3c2e" />
      <path d="M41 14L48 13L46 18Z" fill="#6ab06a" />
      <path d="M15.500 12.500Q24 21 48 21T80.500 12.500L74 80Q73 87 48 87T23 80Z" fill="url(#trg)" opacity="0.96" />
      <path d="M25 80Q27 75 48 75T71 80Q68 86 48 86T25 80Z" fill="#85898c" opacity="0.600" />
      <path d="M15.500 12.500Q24 21 48 21T80.500 12.500" fill="none" stroke="#a6a9ab" strokeWidth="1.500" />
    </g>
  </Art>
);

const dockApps = [
  { Icon: Finder, bg: "#3a7be8", dot: "#9aa3b3" },
  { Icon: Launchpad, bg: "linear-gradient(#b9bec1, #aeb0b3)" },
  { Icon: Safari, bg: "linear-gradient(#ffffff, #d6d6d6)" },
  { Icon: ChromeLogo, bg: "linear-gradient(#f6f7fa, #ececee)", dot: "#99a3b8" },
  { Icon: Messages, bg: "linear-gradient(#88f37f, #56bd45)" },
  { Icon: Mail, bg: "linear-gradient(#3a6bea, #5cc4f8)" },
  { Icon: Photos, bg: "#fdfdfd" },
  { Icon: FaceTime, bg: "linear-gradient(#88ef7c, #55bf45)" },
  { Icon: Calendar, bg: "linear-gradient(#ffffff, #f2f1ef)" },
  { Icon: Contacts, free: true },
  { Icon: Notes, bg: "linear-gradient(#fbfafa, #e2e1da)" },
  { Icon: Freeform, bg: "#ffffff" },
  { Icon: Tv, bg: "linear-gradient(#2c3a33, #0b1010)" },
  { Icon: Reminders, bg: "linear-gradient(#ffffff, #f3f1ee)" },
  { Icon: Numbers, bg: "linear-gradient(#9cf57c, #5cc840)" },
  { Icon: Music, bg: "linear-gradient(#ea6478, #e63a3e)" },
  { Icon: Podcasts, bg: "linear-gradient(#b862e8, #6a22a6)" },
  { Icon: Keynote, bg: "linear-gradient(#5cc2fa, #2e5fe6)" },
  { Icon: PagesArt, bg: "linear-gradient(#f5b64c, #ee8c34)" },
  { Icon: AppStore, bg: "linear-gradient(#51b5f0, #2659d2)" },
  { Icon: Settings, bg: "linear-gradient(#d8e2ea, #8c8c88)" },
];

const AppleMark = styled(FaApple)`
  width: 31px;
  height: 33px;
`;

export default function App() {
  return (
    <Screen>
      <GlobalStyle />
      <MenuBar>
        <AppleMark />
        <MenuList>
          <AppName><Fit w={101}>Chrome</Fit></AppName>
          {menus.map(([label, w, ml]) => <Fit key={label} w={w} ml={ml}>{label}</Fit>)}
        </MenuList>
        <Extras>
          <Extra><CubeIcon /></Extra>
          <Extra $ml={46}><BluetoothIcon /></Extra>
          <Extra $ml={40}><BatteryIcon /></Extra>
          <Extra $ml={37}><WifiIcon /></Extra>
          <Extra $ml={40}><SearchIcon /></Extra>
          <Extra $ml={39}><ControlIcon /></Extra>
          <Extra $ml={36}><SiriIcon /></Extra>
          <Fit w={121} ml={32}>Tue 5 Dec</Fit>
          <Fit w={102} ml={15}>4:58 PM</Fit>
        </Extras>
      </MenuBar>

      <Window>
        <ChromeTop>
          <TabStrip>
            <Lights>
              <Light $c="#ed6a5f" />
              <Light $c="#f5bf4f" />
              <Light $c="#62c554" />
            </Lights>
            <Tab>
              <GlobeIcon />
              <Fit w={234} ml={18}>Read Data Response</Fit>
              <TabClose><CloseIcon /></TabClose>
            </Tab>
            <NewTab><PlusIcon /></NewTab>
            <TabSearch><ChevronIcon /></TabSearch>
          </TabStrip>
          <Bars>
            <Toolbar>
              <ToolIcon $w={26}><ArrowIcon /></ToolIcon>
              <ToolIcon $w={26} $ml={45}><ArrowIcon forward /></ToolIcon>
              <ToolIcon $w={26} $ml={47}><ReloadIcon /></ToolIcon>
              <Omnibox>
                <SiteInfo><InfoIcon /></SiteInfo>
                <Fit w={403}>127.0.0.1<UrlPath>:8000/read_response</UrlPath></Fit>
                <StarSlot><StarIcon /></StarSlot>
              </Omnibox>
              <ToolIcon $w={32} $ml={36}><ShieldIcon /></ToolIcon>
              <ToolIcon $w={34} $ml={41}><PuzzleIcon /></ToolIcon>
              <BarDivider />
              <ToolIcon $w={30} $ml={37}><LeafIcon /></ToolIcon>
              <ToolIcon $w={30} $ml={42}><PanelIcon /></ToolIcon>
              <Avatar>a</Avatar>
              <ToolIcon $w={8} $ml={48}><DotsIcon /></ToolIcon>
            </Toolbar>
            <BookmarkBar>
              {bookmarks.map(({ ml, Icon, gap, text, w }, i) => (
                <React.Fragment key={i}>
                  <BookmarkIcon $ml={ml}><Icon /></BookmarkIcon>
                  {text && <Fit w={w} ml={gap}>{text}</Fit>}
                </React.Fragment>
              ))}
            </BookmarkBar>
          </Bars>
        </ChromeTop>
        <Page>
          <Heading>Read Data Response</Heading>
          <DataTable>
            <colgroup>{colWidths.map((w, i) => <col key={i} style={{ width: w }} />)}</colgroup>
            <thead>
              <tr>{headers.map((h) => <th key={h}>{h}</th>)}</tr>
            </thead>
            <tbody>
              {records.map((r, i) => (
                <tr key={i}>{r.map((c, j) => <td key={j}>{c}</td>)}</tr>
              ))}
            </tbody>
          </DataTable>
        </Page>
      </Window>

      <Dock>
        {dockApps.map(({ Icon, bg, dot, free }, i) => (
          <DockItem key={i}>
            {free ? <Icon /> : <Tile $bg={bg}><Icon /></Tile>}
            {dot && <RunningDot $c={dot} />}
          </DockItem>
        ))}
        <DockRule $l={23} $r={20} $c="#84677a" />
        <DockItem><FreeIcon><PythonDoc /></FreeIcon><RunningDot $c="#cf9cae" /></DockItem>
        <DockItem><FreeIcon><Database /></FreeIcon></DockItem>
        <DockItem><FreeIcon><Automator /></FreeIcon></DockItem>
        <DockItem><Tile $bg="#fff"><VsCode /></Tile><RunningDot $c="#e09c94" /></DockItem>
        <DockRule $l={22} $r={22} $c="#a06458" />
        <DockItem $w={97}><FreeIcon><Trash /></FreeIcon></DockItem>
      </Dock>
    </Screen>
  );
}
